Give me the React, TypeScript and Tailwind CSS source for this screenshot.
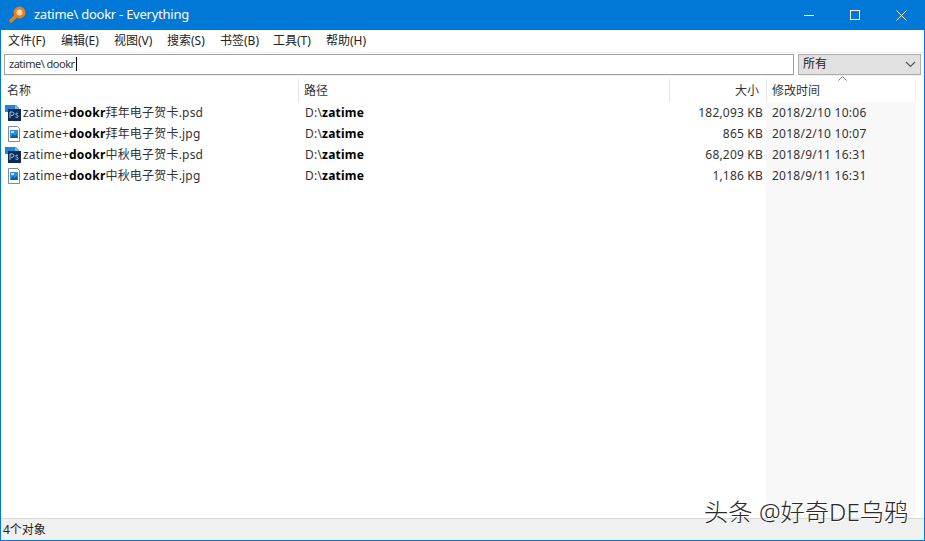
import React from "react";

const font = { fontFamily: '"Noto Sans", "Noto Sans CJK SC", sans-serif' };

function PsIcon() {
  return (
    <svg width="17" height="16" viewBox="0 0 17 16" className="shrink-0">
      <path d="M0 0h11l3 3v2H3v2H0z" fill="#1e88d2" />
      <rect x="3" y="4" width="13" height="12" fill="#0f2a56" />
      <path d="M10 0v4h4z" fill="#7cc4f0" />
      <path d="M5 13V7h2.200a1.600 1.600 0 0 1 0 3.400H6M13 8.600c-1-.7-2.400-.5-2.400.5 0 1.200 2.600.9 2.600 2.300 0 1.100-1.600 1.300-2.700.6" fill="none" stroke="#9cd3f5" strokeWidth="1" />
    </svg>
  );
}

function JpgIcon() {
  return (
    <svg width="17" height="16" viewBox="0 0 17 16" className="shrink-0">
      <path d="M3.500.5h9l2 2v13h-11z" fill="#fff" stroke="#7f8a96" />
      <rect x="5" y="4" width="8" height="8" fill="#2f8fdc" />
      <path d="M5 12l3-4 2 2 1.500-2.500L13 12z" fill="#0f5fa8" />
      <rect x="6" y="5" width="3" height="2" fill="#bfe3fa" />
    </svg>
  );
}

const rows = [
  { icon: "ps", before: "zatime+", bold: "dookr", after: "拜年电子贺卡.psd", size: "182,093 KB", date: "2018/2/10 10:06" },
  { icon: "jpg", before: "zatime+", bold: "dookr", after: "拜年电子贺卡.jpg", size: "865 KB", date: "2018/2/10 10:07" },
  { icon: "ps", before: "zatime+", bold: "dookr", after: "中秋电子贺卡.psd", size: "68,209 KB", date: "2018/9/11 16:31" },
  { icon: "jpg", before: "zatime+", bold: "dookr", after: "中秋电子贺卡.jpg", size: "1,186 KB", date: "2018/9/11 16:31" },
];

const menus = ["文件(F)", "编辑(E)", "视图(V)", "搜索(S)", "书签(B)", "工具(T)", "帮助(H)"];

export default function App() {
  return (
    <div
      style={font}
      className="relative flex h-[541px] w-[925px] flex-col overflow-hidden border-x border-b border-[#0078d7] bg-white text-[12px] text-[#222]"
    >
      {/* title bar */}
      <div className="-mx-px flex h-[30px] shrink-0 items-center bg-[#0078d7] text-white">
        <svg width="20" height="20" viewBox="0 0 20 20" className="ml-[8px] mr-[6px] shrink-0">
          <circle cx="11.500" cy="7.500" r="4.500" fill="#ffd9a8" stroke="#ef7d16" strokeWidth="3" />
          <path d="M7.500 11.500L3 16" stroke="#ef7d16" strokeWidth="3.500" strokeLinecap="round" />
        </svg>
        <span className="text-[13px] tracking-[-0.25px]">zatime\ dookr - Everything</span>
        <div className="ml-auto flex h-full pr-px">
          <div className="flex w-[46px] items-center justify-center">
            <div className="h-px w-[10px] bg-white" />
          </div>
          <div className="flex w-[46px] items-center justify-center">
            <div className="h-[10px] w-[10px] border border-white" />
          </div>
          <div className="flex w-[46px] items-center justify-center">
            <svg width="11" height="11" viewBox="0 0 11 11">
              <path d="M.5.500l10 10M10.500.500l-10 10" stroke="#fff" strokeWidth="1" />
            </svg>
          </div>
        </div>
      </div>

      {/* menu */}
      <div className="flex h-[22px] shrink-0 items-center gap-[8px] pl-[7px]">
        {menus.map((m) => (
          <span key={m} className="w-[45px] whitespace-nowrap text-[12px]">
            {m}
          </span>
        ))}
      </div>

      {/* search row */}
      <div className="flex h-[23px] shrink-0 items-center gap-[4px] border-t border-[#f0f0f0] pl-[3px] pr-[3px]">
        <div className="flex h-[21px] w-[790px] items-center border border-[#a0a0a0] pl-[4px] text-[11px] tracking-[-0.5px] text-[#333]">
          zatime\ dookr
          <span className="ml-px h-[14px] w-px bg-black" />
        </div>
        <div className="flex h-[21px] flex-1 items-center justify-between border border-[#adadad] bg-[#e1e1e1] pl-[4px] pr-[4px]">
          <span className="text-[12px]">所有</span>
          <svg width="11" height="7" viewBox="0 0 11 7">
            <path d="M1 1l4.500 4.500L10 1" fill="none" stroke="#555" strokeWidth="1.200" />
          </svg>
        </div>
      </div>

      {/* list */}
      <div className="relative flex min-h-0 flex-1 flex-col border-t border-[#f0f0f0]">
        <div className="flex h-[26px] shrink-0 items-end text-[12px] text-[#333]">
          <div className="h-[23px] w-[297px] pl-[6px] pt-[3px]">名称</div>
          <div className="h-[23px] w-[371px] border-l border-[#e5e5e5] pl-[5px] pt-[3px]">路径</div>
          <div className="h-[23px] w-[97px] border-l border-[#e5e5e5] pr-[7px] pt-[3px] text-right">大小</div>
          <div className="relative h-[23px] w-[149px] border-l border-[#e5e5e5] pl-[5px] pt-[3px]">
            修改时间
            <svg width="9" height="5" viewBox="0 0 9 5" className="absolute -top-[3px] left-[71px]">
              <path d="M.5 4.500l4-4 4 4" fill="none" stroke="#777" strokeWidth="1" />
            </svg>
          </div>
          <div className="h-[23px] flex-1 border-l border-[#f0f0f0]" />
        </div>
        <div className="flex min-h-0 flex-1">
          <div className="flex w-[765px] flex-col">
            {rows.map((r) => (
              <div key={r.after} className="flex h-[21px] items-center text-[12px] tracking-[0.2px] text-[#333]">
                <div className="flex w-[297px] items-center gap-[1px] pl-[4px]">
                  {r.icon === "ps" ? <PsIcon /> : <JpgIcon />}
                  <span className="whitespace-nowrap">
                    {r.before}
                    <b className="font-bold text-black">{r.bold}</b>
                    {r.after}
                  </span>
                </div>
                <div className="w-[371px] pl-[7px]">
                  D:\<b className="font-bold text-black">zatime</b>
                </div>
                <div className="w-[97px] pr-[3px] text-right">{r.size}</div>
              </div>
            ))}
          </div>
          <div className="flex w-[149px] flex-col bg-[#f8f8f8] pl-[6px] text-[12px] tracking-[0.25px] text-[#333]">
            {rows.map((r) => (
              <div key={r.after} className="flex h-[21px] items-center whitespace-nowrap">
                {r.date}
              </div>
            ))}
          </div>
          <div className="flex-1" />
        </div>
      </div>

      {/* status bar */}
      <div className="flex h-[22px] shrink-0 items-center border-t border-[#d8d8d8] bg-[#f0f0f0] pl-[2px] text-[12px] text-[#222]">
        4个对象
      </div>

      {/* watermark */}
      <div
        className="absolute left-[703px] top-[497px] whitespace-nowrap text-[24.3px] font-light leading-[30px] text-[#2a2a2a] [text-shadow:0_0_2px_#fff,1px_1px_1px_#fff]"
      >
        头条 @好奇DE乌鸦
      </div>
    </div>
  );
}
